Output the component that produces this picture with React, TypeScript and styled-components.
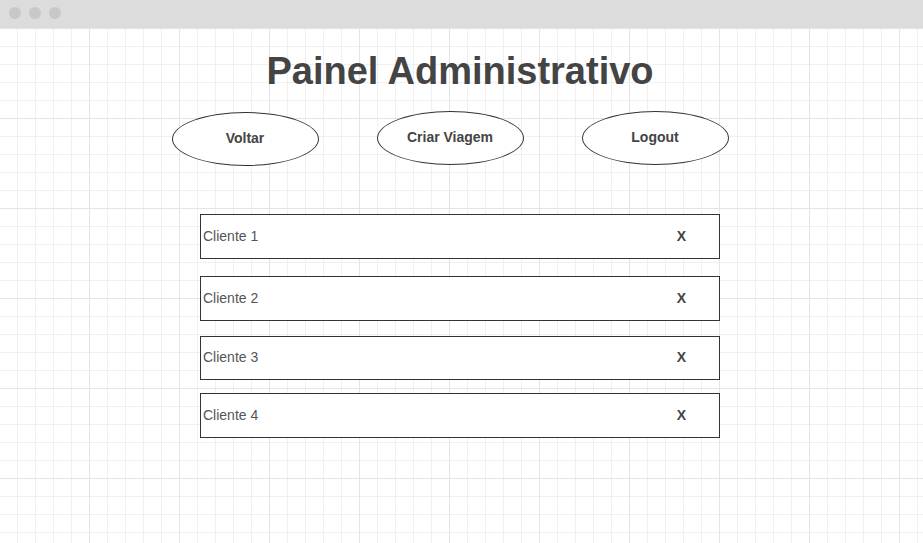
import React from "react";
import styled, { createGlobalStyle } from "styled-components";

const Global = createGlobalStyle`
  html, body { margin: 0; padding: 0; background: #ffffff; }
  body { font-family: "Liberation Sans", Arial, sans-serif; }
  * { box-sizing: border-box; }
`;

const Window = styled.div`
  width: 923px;
  height: 543px;
  display: flex;
  flex-direction: column;
  overflow: hidden;
`;

const TitleBar = styled.div`
  height: 28px;
  flex: none;
  background: #dcdcdc;
  display: flex;
  align-items: center;
  gap: 8px;
  padding: 0 0 2px 9px;
`;

const Dot = styled.span`
  width: 12px;
  height: 12px;
  border-radius: 50%;
  background: #c8c8c8;
`;

const Canvas = styled.div`
  flex: 1;
  display: flex;
  flex-direction: column;
  align-items: stretch;
  background-color: #ffffff;
  background-image:
    linear-gradient(to right, transparent 89px, #e4e4e4 89px, #e4e4e4 90px, transparent 90px),
    linear-gradient(to bottom, #e4e4e4 0, #e4e4e4 1px, transparent 1px),
    linear-gradient(to right, transparent 17px, #f0f0f0 17px, #f0f0f0 18px, transparent 18px),
    linear-gradient(to bottom, #f0f0f0 0, #f0f0f0 1px, transparent 1px);
  background-size: 90px 90px, 90px 90px, 18px 18px, 18px 18px;
`;

const Title = styled.h1`
  margin: 24px 0 0;
  padding-right: 3px;
  font-size: 38px;
  line-height: 38px;
  font-weight: 700;
  color: #444444;
  text-align: center;
`;

const ButtonRow = styled.div`
  display: flex;
  justify-content: center;
  align-items: flex-start;
  gap: 58px;
  margin-top: 21px;
  padding-right: 23px;
`;

const Pill = styled.button<{ $drop?: number }>`
  width: 147px;
  height: 54px;
  margin-top: ${(p) => p.$drop ?? 0}px;
  border: 1px solid #333333;
  border-radius: 50%;
  background: #ffffff;
  font-family: "Liberation Sans", Arial, sans-serif;
  font-size: 14px;
  font-weight: 700;
  color: #444444;
  display: flex;
  align-items: center;
  justify-content: center;
  padding: 0 0 2px;
  cursor: pointer;
`;

const List = styled.div`
  display: flex;
  flex-direction: column;
  align-items: center;
  margin-top: 48px;
  padding-right: 3px;
`;

const Row = styled.div<{ $gap: number; $h: number }>`
  width: 520px;
  height: ${(p) => p.$h}px;
  margin-top: ${(p) => p.$gap}px;
  border: 1px solid #333333;
  background: #ffffff;
  display: flex;
  align-items: center;
  justify-content: space-between;
  padding: 0 33px 2px 2px;
`;

const Name = styled.span`
  font-size: 14px;
  color: #555555;
`;

const Remove = styled.span`
  font-size: 14px;
  font-weight: 700;
  color: #444444;
`;

const clients = [
  { name: "Cliente 1", gap: 0, h: 45 },
  { name: "Cliente 2", gap: 17, h: 45 },
  { name: "Cliente 3", gap: 15, h: 44 },
  { name: "Cliente 4", gap: 13, h: 45 },
];

export default function App() {
  return (
    <>
      <Global />
      <Window>
        <TitleBar>
          <Dot />
          <Dot />
          <Dot />
        </TitleBar>
        <Canvas>
          <Title>Painel Administrativo</Title>
          <ButtonRow>
            <Pill $drop={1}>Voltar</Pill>
            <Pill>Criar Viagem</Pill>
            <Pill>Logout</Pill>
          </ButtonRow>
          <List>
            {clients.map((c) => (
              <Row key={c.name} $gap={c.gap} $h={c.h}>
                <Name>{c.name}</Name>
                <Remove>X</Remove>
              </Row>
            ))}
          </List>
        </Canvas>
      </Window>
    </>
  );
}
